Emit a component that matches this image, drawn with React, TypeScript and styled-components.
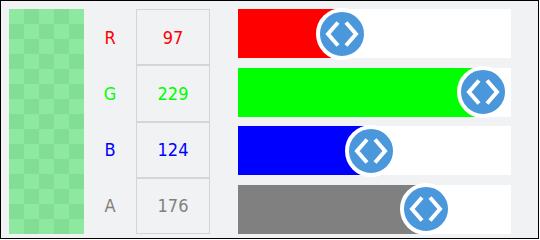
import React from 'react'
import styled, { createGlobalStyle } from 'styled-components'

const GlobalStyle = createGlobalStyle`
  html, body {
    margin: 0;
    padding: 0;
    background: #ffffff;
  }
  * {
    box-sizing: border-box;
  }
`

type Channel = {
  label: string
  value: number
  color: string
}

const channels: Channel[] = [
  { label: 'R', value: 97, color: '#ff0000' },
  { label: 'G', value: 229, color: '#00ff00' },
  { label: 'B', value: 124, color: '#0000ff' },
  { label: 'A', value: 176, color: '#808080' },
]

const Frame = styled.div`
  width: 539px;
  height: 239px;
  border: 1px solid #000;
  background: #f1f2f4;
  display: flex;
  align-items: flex-start;
  padding: 8px 0 0 8px;
  font-family: 'Liberation Sans Narrow', 'DejaVu Sans Condensed', sans-serif;
`

const Swatch = styled.div`
  width: 75px;
  height: 225px;
  flex: none;
  background-color: #8ee89f;
  background-image: linear-gradient(45deg, #82de95 25%, transparent 25%, transparent 75%, #82de95 75%),
    linear-gradient(45deg, #82de95 25%, transparent 25%, transparent 75%, #82de95 75%);
  background-size: 30px 30px;
  background-position: 0 0, 15px 15px;
`

const Table = styled.div`
  display: grid;
  grid-template-columns: 52px 74px;
  grid-template-rows: repeat(4, 1fr);
  height: 225px;
  flex: none;
`

const Label = styled.div<{ $color: string }>`
  display: flex;
  align-items: center;
  justify-content: center;
  color: ${(p) => p.$color};
  font-size: 18px;
`

const ValueCell = styled.div<{ $color: string }>`
  display: flex;
  align-items: center;
  justify-content: center;
  border: 1px solid #d4d5d8;
  color: ${(p) => p.$color};
  font-size: 18px;
`

const Bars = styled.div`
  margin-left: 28px;
  width: 273px;
  height: 225px;
  display: flex;
  flex-direction: column;
  justify-content: space-between;
  flex: none;
`

const Track = styled.div`
  position: relative;
  height: 49px;
  background: #ffffff;
`

const Fill = styled.div<{ $color: string }>`
  height: 100%;
  background: ${(p) => p.$color};
`

const Knob = styled.div`
  position: absolute;
  top: 50%;
  width: 52px;
  height: 52px;
  border-radius: 50%;
  border: 4px solid #ffffff;
  background: #4b97dc;
  transform: translate(-50%, -50%);
  display: flex;
  align-items: center;
  justify-content: center;

  svg {
    display: block;
  }
`

function KnobIcon() {
  return (
    <svg width="36" height="36" viewBox="0 0 36 36" fill="none">
      <polyline points="14,6.5 4,18 14,29.5" stroke="#fff" strokeWidth="4" strokeLinejoin="miter" />
      <polyline points="22,6.5 32,18 22,29.5" stroke="#fff" strokeWidth="4" strokeLinejoin="miter" />
    </svg>
  )
}

export default function App() {
  return (
    <>
      <GlobalStyle />
      <Frame>
        <Swatch />
        <Table>
          {channels.map((c) => (
            <React.Fragment key={c.label}>
              <Label $color={c.color}>{c.label}</Label>
              <ValueCell $color={c.color}>{c.value}</ValueCell>
            </React.Fragment>
          ))}
        </Table>
        <Bars>
          {channels.map((c) => {
            const pct = (c.value / 255) * 100
            return (
              <Track key={c.label}>
                <Fill $color={c.color} style={{ width: `${pct}%` }} />
                <Knob style={{ left: `${pct}%` }}>
                  <KnobIcon />
                </Knob>
              </Track>
            )
          })}
        </Bars>
      </Frame>
    </>
  )
}
